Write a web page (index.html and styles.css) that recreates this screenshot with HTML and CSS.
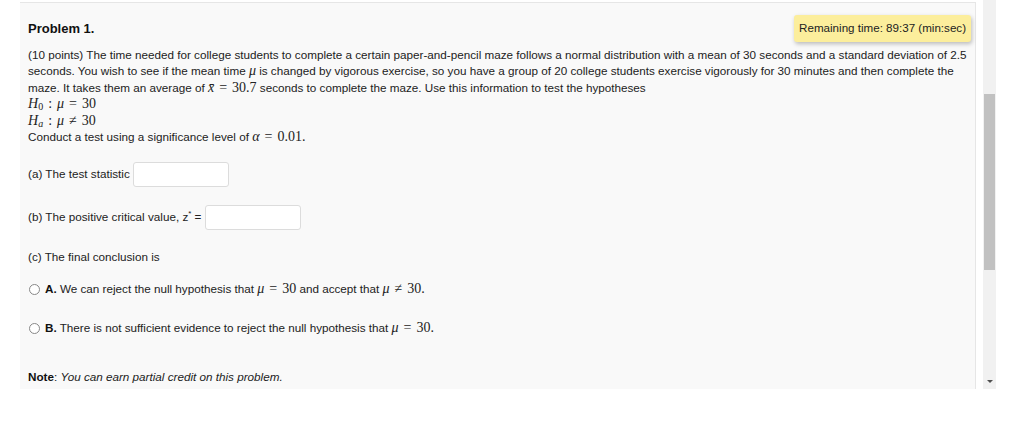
FILE: index.html
```html
<!DOCTYPE html>
<html>
<head>
<meta charset="utf-8">
<link rel="stylesheet" href="styles.css">
</head>
<body>
<div class="frame">
  <div class="panel">
    <div class="head">
      <h3 class="title">Problem 1.</h3>
      <div class="timer">Remaining time: 89:37 (min:sec)</div>
    </div>
    <div class="text">
      <p class="intro">(10 points) The time needed for college students to complete a certain paper-and-pencil maze follows a normal distribution with a mean of 30 seconds and a standard deviation of 2.5 seconds. You wish to see if the mean time <span class="m"><i>μ</i></span> is changed by vigorous exercise, so you have a group of 20 college students exercise vigorously for 30 minutes and then complete the maze. It takes them an average of <span class="m"><i>x̄</i><span class="eq">=</span>30.7</span> seconds to complete the maze. Use this information to test the hypotheses</p>
      <div class="hyp"><i>H</i><sub>0</sub><span class="col">:</span><i>μ</i><span class="eq">=</span>30</div>
      <div class="hyp"><i>H</i><sub><i>a</i></sub><span class="col">:</span><i>μ</i><span class="eq">≠</span>30</div>
      <p class="line">Conduct a test using a significance level of <span class="m"><i>α</i><span class="eq">=</span>0.01.</span></p>
      <div class="q qa">(a) The test statistic <span class="box"></span></div>
      <div class="q qb">(b) The positive critical value, z<sup>*</sup> = <span class="box"></span></div>
      <div class="q qc">(c) The final conclusion is</div>
      <div class="opt oa"><span class="radio"></span><b>A.</b> We can reject the null hypothesis that <span class="m"><i>μ</i><span class="eq">=</span>30</span> and accept that <span class="m"><i>μ</i><span class="eq">≠</span>30.</span></div>
      <div class="opt ob"><span class="radio"></span><b>B.</b> There is not sufficient evidence to reject the null hypothesis that <span class="m"><i>μ</i><span class="eq">=</span>30.</span></div>
      <div class="note"><b>Note</b>: <i>You can earn partial credit on this problem.</i></div>
    </div>
  </div>
  <div class="scroll">
    <div class="thumb"></div>
    <div class="arrow"></div>
  </div>
</div>
</body>
</html>
```
FILE: styles.css
```css
html, body { margin: 0; padding: 0; background: #ffffff; }
body { font-family: "Liberation Sans", Arial, sans-serif; color: #222; width: 1009px; height: 426px; overflow: hidden; }
.frame { display: flex; padding-top: 2px; }
.panel { margin-left: 20px; width: 956px; height: 387px; background: #f9f9f9; border-top: 1px solid #e6e6e6; border-right: 1px solid #e6e6e6; box-sizing: border-box; padding: 0 4px 0 8px; }
.head { display: flex; justify-content: space-between; align-items: flex-start; padding-top: 12px; }
.title { margin: 6px 0 0 0; font-size: 13px; font-weight: bold; color: #111; }
.timer { background: #fcee9c; font-size: 11.6px; color: #222; padding: 6px 5px 7px 5px; border-radius: 3px; box-shadow: 1px 2px 4px rgba(0,0,0,0.25); line-height: 14px; }
.text { font-size: 11.7px; line-height: 16.4px; }
.intro { margin: 5px 0 0 0; }
.m { font-family: "Liberation Serif", "Times New Roman", serif; font-size: 14px; line-height: 10px; color: #222; }
.eq { display: inline-block; margin: 0 5px; font-style: normal; }
.col { display: inline-block; margin: 0 5px; }
.hyp { font-family: "Liberation Serif", serif; font-size: 14px; line-height: 16.5px; height: 16.5px; }
.hyp sub { font-size: 10px; vertical-align: -2px; line-height: 0; }
.line { margin: 0; }
.q { display: block; }
.qa { margin-top: 16px; }
.qb { margin-top: 18px; }
.qc { margin-top: 19px; }
.box { display: inline-block; vertical-align: middle; width: 96px; height: 25px; background: #fff; border: 1px solid #dcdcdc; border-radius: 3px; box-sizing: border-box; }
.q sup { font-size: 8px; line-height: 0; }
.opt { display: block; }
.opt b { color: #111; }
.oa { margin-top: 16px; }
.ob { margin-top: 23px; }
.note { margin-top: 32px; }
.note b { color: #111; }
.radio { display: inline-block; vertical-align: -2px; width: 9px; height: 9px; border: 1px solid #888; border-radius: 50%; background: #fff; margin: 0 5px 0 1px; }
.scroll { margin-left: 7px; width: 13px; height: 389px; background: #f1f1f1; position: relative; margin-top: -2px; }
.thumb { margin: 94px 1px 0 1px; height: 176px; background: #c1c1c1; }
.arrow { position: absolute; left: 4px; top: 380px; width: 0; height: 0; border-left: 3px solid transparent; border-right: 3px solid transparent; border-top: 3px solid #505050; }
```
